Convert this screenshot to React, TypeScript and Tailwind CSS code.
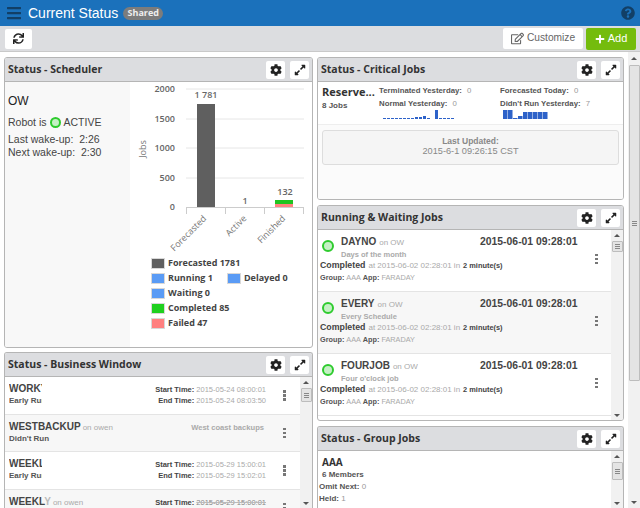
import { ReactNode } from 'react';
import { FaBars, FaCog, FaExpandAlt, FaPlus, FaQuestionCircle, FaRegEdit, FaSync } from 'react-icons/fa';

const titleFont = "font-['Open_Sans',sans-serif]";

function PanelHead({ title }: { title: string }) {
  return (
    <div className="flex h-[24px] shrink-0 items-center justify-between border-b border-[#b5b5b5] bg-[#dcdde0] pl-[3px] pr-[3px]">
      <span className={`${titleFont} text-[10.5px] font-bold text-[#333]`}>{title}</span>
      <div className="flex gap-[5px]">
        <span className="flex h-[18px] w-[19px] items-center justify-center rounded-[2px] bg-white text-[#222]">
          <FaCog size={12} />
        </span>
        <span className="flex h-[18px] w-[19px] items-center justify-center rounded-[2px] bg-white text-[#222]">
          <FaExpandAlt size={12} />
        </span>
      </div>
    </div>
  );
}

function Panel({ title, className, children }: { title: string; className: string; children: ReactNode }) {
  return (
    <div className={`flex flex-col overflow-hidden rounded-[3px] border border-[#b5b5b5] bg-white ${className}`}>
      <PanelHead title={title} />
      {children}
    </div>
  );
}

function Scrollbar({ thumbTop, thumbHeight, width = 'w-[12px]' }: { thumbTop: string; thumbHeight: string; width?: string }) {
  return (
    <div className={`flex ${width} shrink-0 flex-col items-center bg-[#f1f1f1]`}>
      <div className="flex h-[10px] shrink-0 items-center justify-center">
        <div className="h-0 w-0 border-x-[3px] border-b-[3px] border-x-transparent border-b-[#555]" />
      </div>
      <div className={`${thumbTop} ${thumbHeight} flex w-[11px] flex-col items-center justify-center gap-[1px] rounded-[1px] border border-[#bdbdbd] bg-[#e4e4e4]`}>
        <div className="h-px w-[5px] bg-[#888]" />
        <div className="h-px w-[5px] bg-[#888]" />
        <div className="h-px w-[5px] bg-[#888]" />
      </div>
      <div className="flex-1" />
      <div className="flex h-[10px] shrink-0 items-center justify-center">
        <div className="h-0 w-0 border-x-[3px] border-t-[3px] border-x-transparent border-t-[#555]" />
      </div>
    </div>
  );
}

function Kebab() {
  return (
    <div className="flex flex-col gap-[1.5px]">
      <div className="h-[2.5px] w-[3px] bg-[#777]" />
      <div className="h-[2.5px] w-[3px] bg-[#777]" />
      <div className="h-[2.5px] w-[3px] bg-[#777]" />
    </div>
  );
}

function Chart() {
  const ticks = [
    { label: '2000', y: 7 },
    { label: '1500', y: 37 },
    { label: '1000', y: 66 },
    { label: '500', y: 96 },
    { label: '0', y: 125 },
  ];
  return (
    <svg width="182" height="175" className="block shrink-0">
      <g fontFamily="Open Sans, sans-serif" fontSize="9" fill="#666">
        {ticks.map((t) => (
          <g key={t.label}>
            {t.label !== '0' && <line x1="56" x2="174" y1={t.y} y2={t.y} stroke="#e6e6e6" />}
            <text x="45" y={t.y + 3} textAnchor="end" fontWeight="600">{t.label}</text>
          </g>
        ))}
        <text transform="translate(16 67) rotate(-90)" textAnchor="middle" fontSize="9" fill="#777">Jobs</text>
      </g>
      <rect x="67" y="22" width="18" height="103" fill="#5f5f5f" />
      <rect x="145" y="118" width="18" height="4" fill="#1fc41f" />
      <rect x="145" y="122" width="18" height="3" fill="#ff8080" />
      <line x1="56" x2="174" y1="125.5" y2="125.5" stroke="#ccc" />
      {[56.5, 95.5, 134.5, 173.5].map((x) => (
        <line key={x} x1={x} x2={x} y1="125" y2="132" stroke="#ccc" />
      ))}
      <g fontFamily="Open Sans, sans-serif" fontSize="9" fontWeight="600" fill="#666" textAnchor="middle">
        <text x="76" y="16">1 781</text>
        <text x="115" y="122">1</text>
        <text x="155" y="113">132</text>
      </g>
      <g fontFamily="Open Sans, sans-serif" fontSize="9" fill="#777" textAnchor="end">
        <text transform="translate(77 137) rotate(-45)">Forecasted</text>
        <text transform="translate(117 137) rotate(-45)">Active</text>
        <text transform="translate(156 137) rotate(-45)">Finished</text>
      </g>
    </svg>
  );
}

function LegendItem({ color, label }: { color: string; label: string }) {
  return (
    <div className="flex h-[12px] items-center gap-[4px]">
      <span className={`h-[9px] w-[12px] ${color} outline outline-[#d8d8d8]`} />
      <span className={`${titleFont} text-[9px] font-bold leading-[12px] text-[#444]`}>{label}</span>
    </div>
  );
}

function Scheduler() {
  return (
    <Panel title="Status - Scheduler" className="h-[291px] shrink-0">
      <div className="flex min-h-0 flex-1">
        <div className="w-[125px] shrink-0 bg-[#f8f8f8] pl-[3px] pt-[11px] font-['Liberation_Sans',sans-serif] text-[10.5px] text-[#444]">
          <div className="text-[12px] leading-[16px] text-[#222]">OW</div>
          <div className="mt-[6px] flex items-center gap-[3px] leading-[14px]">
            Robot is
            <span className="h-[11px] w-[11px] rounded-full border-2 border-[#2ecb2e] bg-[#c5f0c5]" />
            ACTIVE
          </div>
          <div className="mt-[4px] leading-[13px]">Last wake-up:&nbsp; 2:26</div>
          <div className="leading-[13px]">Next wake-up:&nbsp; 2:30</div>
        </div>
        <div className="flex flex-1 flex-col">
          <Chart />
          <div className="flex flex-col gap-[3px] pl-[22px]">
            <LegendItem color="bg-[#5f5f5f]" label="Forecasted 1781" />
            <div className="flex gap-[15px]">
              <LegendItem color="bg-[#5a9bf5]" label="Running 1" />
              <LegendItem color="bg-[#5a9bf5]" label="Delayed 0" />
            </div>
            <LegendItem color="bg-[#5a9bf5]" label="Waiting 0" />
            <LegendItem color="bg-[#1fd01f]" label="Completed 85" />
            <LegendItem color="bg-[#ff8080]" label="Failed 47" />
          </div>
        </div>
      </div>
    </Panel>
  );
}

function WindowRow({ name, owner, status, start, end, note, shade, clip, ghost }: {
  name: ReactNode; owner?: string; status: string; start?: string; end?: string; note?: string; shade?: boolean; clip?: boolean; ghost?: boolean;
}) {
  return (
    <div className={`flex h-[37.5px] shrink-0 items-center border-b border-[#e4e4e4] pl-[4px] pr-[14px] ${shade ? 'bg-[#f7f7f7]' : 'bg-white'}`}>
      <div className="flex-1 pb-[2px] font-['Liberation_Sans',sans-serif]">
        <div className="flex h-[14px] items-baseline justify-between">
          <div className="flex items-baseline gap-[2px]">
            <span className={`${clip ? 'w-[33px] overflow-hidden' : ''} whitespace-nowrap text-[10px] font-bold text-[#444]`}>{name}</span>
            {owner && <span className="text-[8px] text-[#aaa]">on {owner}</span>}
          </div>
          {start && (
            <span className="whitespace-nowrap text-right text-[7.5px] text-[#aaa]">
              <b className="text-[#444]">Start Time:</b>{' '}
              <span className={ghost ? 'text-[#888] line-through decoration-[#bbb]' : ''}>{start}</span>
            </span>
          )}
          {note && <span className="mr-[2px] whitespace-nowrap text-[7.6px] font-bold text-[#aaa]">{note}</span>}
        </div>
        <div className="flex h-[12px] items-baseline justify-between">
          <span className={`${clip ? 'w-[33px] overflow-hidden' : ''} whitespace-nowrap text-[8px] font-bold text-[#555]`}>{status}</span>
          {end && (
            <span className="whitespace-nowrap text-right text-[7.5px] text-[#aaa]">
              <b className="text-[#444]">End Time:</b> {end}
            </span>
          )}
        </div>
      </div>
      <div className="ml-[17px]"><Kebab /></div>
    </div>
  );
}

function BusinessWindow() {
  return (
    <Panel title="Status - Business Window" className="min-h-0 flex-1 rounded-b-none border-b-0">
      <div className="flex min-h-0 flex-1">
        <div className="min-w-0 flex-1 overflow-hidden">
          <WindowRow clip name="WORKY" status="Early Run" start="2015-05-24 08:00:01" end="2015-05-24 08:03:50" />
          <WindowRow shade name="WESTBACKUP" owner="owen" status="Didn't Run" note="West coast backups" />
          <WindowRow clip name="WEEKLY" status="Early Run" start="2015-05-29 15:00:01" end="2015-05-29 15:02:01" />
          <WindowRow shade ghost name={<>WEEKL<span className="text-[#bbb]">Y</span></>} owner="owen" status="" start="2015-05-29 15:00:01" />
        </div>
        <Scrollbar thumbTop="mt-[1px]" thumbHeight="h-[14px]" />
      </div>
    </Panel>
  );
}

function Stat({ label, value }: { label: string; value: string }) {
  return (
    <div className="whitespace-nowrap font-['Liberation_Sans',sans-serif] text-[7.8px] font-bold leading-[12px] text-[#555]">
      {label} <span className="ml-[3px] font-normal text-[#999]">{value}</span>
    </div>
  );
}

function Spark({ heights, step, barWidth }: { heights: number[]; step: number; barWidth: number }) {
  return (
    <svg width={heights.length * step} height="9" className="block">
      {heights.map((h, i) => (
        <rect key={i} x={i * step} y={9 - h} width={barWidth} height={h} fill="#2d62c9" />
      ))}
    </svg>
  );
}

function CriticalJobs() {
  return (
    <Panel title="Status - Critical Jobs" className="h-[143px] shrink-0">
      <div className="flex h-[43px] shrink-0 border-b border-[#eee] pl-[4px] pt-[3px]">
        <div className={`${titleFont} w-[57px] shrink-0`}>
          <div className="text-[11px] font-bold leading-[14px] text-[#333]">Reserve...</div>
          <div className="mt-[1px] font-['Liberation_Sans',sans-serif] text-[8px] font-bold leading-[12px] text-[#555]">8 Jobs</div>
        </div>
        <div className="w-[121px] shrink-0">
          <Stat label="Terminated Yesterday:" value="0" />
          <div className="mt-[1px]"><Stat label="Normal Yesterday:" value="0" /></div>
          <div className="ml-[4px]">
            <Spark step={4} barWidth={3} heights={[1, 1, 1, 1, 1, 1, 1, 1, 2, 2, 3, 1, 0, 9, 1, 1, 1, 1]} />
          </div>
        </div>
        <div className="flex-1">
          <Stat label="Forecasted Today:" value="0" />
          <div className="mt-[1px]"><Stat label="Didn't Run Yesterday:" value="7" /></div>
          <div className="ml-[3px]">
            <Spark step={5} barWidth={4.5} heights={[9, 9, 1, 3, 7, 7, 7, 7, 7]} />
          </div>
        </div>
      </div>
      <div className="flex-1 bg-[#fbfbfb] px-[4px] pt-[5px]">
        <div className="flex h-[35px] flex-col items-center justify-center rounded-[3px] border border-[#dddddd] bg-[#f5f5f5] pb-[3px] font-['Liberation_Sans',sans-serif] leading-[9px] text-[#888]">
          <b className="text-[8.5px] font-bold">Last Updated:</b>
          <span className="mt-[1px] text-[9.2px]">2015-6-1 09:26:15 CST</span>
        </div>
      </div>
    </Panel>
  );
}

function JobRow({ name, desc, shade }: { name: string; desc: string; shade?: boolean }) {
  return (
    <div className={`flex h-[62px] shrink-0 border-b border-[#e4e4e4] pl-[2px] font-['Liberation_Sans',sans-serif] ${shade ? 'bg-[#f7f7f7]' : 'bg-white'}`}>
      <div className="flex-1">
        <div className="flex items-start pt-[4px]">
          <span className="ml-[2px] mt-[6px] h-[12px] w-[12px] shrink-0 rounded-full border-2 border-[#2ecb2e] bg-[#c5f0c5]" />
          <div className="ml-[7px] w-[139px]">
            <div className="flex items-baseline gap-[3px] leading-[15px]">
              <span className="text-[10px] font-bold text-[#444]">{name}</span>
              <span className="text-[8px] text-[#aaa]">on OW</span>
            </div>
            <div className="text-[7.5px] font-bold leading-[10px] text-[#aaa]">{desc}</div>
          </div>
          <span className="text-[10.4px] font-bold leading-[15px] text-[#444]">2015-06-01 09:28:01</span>
        </div>
        <div className="-mt-[1px] flex items-baseline gap-[3px] whitespace-nowrap leading-[13px]">
          <span className="text-[8.8px] font-bold text-[#444]">Completed</span>
          <span className="text-[8px] text-[#aaa]">at 2015-06-02 02:28:01 in</span>
          <span className="text-[7.4px] font-bold text-[#444]">2 minute(s)</span>
        </div>
        <div className="text-[7.3px] font-bold leading-[12px] text-[#555]">
          Group: <span className="font-normal text-[#aaa]">AAA</span> App: <span className="font-normal text-[#aaa]">FARADAY</span>
        </div>
      </div>
      <div className="flex w-[16px] items-center pb-[3px]"><Kebab /></div>
    </div>
  );
}

function RunningJobs() {
  return (
    <Panel title="Running & Waiting Jobs" className="h-[216px] shrink-0">
      <div className="flex min-h-0 flex-1">
        <div className="min-w-0 flex-1 overflow-hidden">
          <JobRow name="DAYNO" desc="Days of the month" />
          <JobRow shade name="EVERY" desc="Every Schedule" />
          <JobRow name="FOURJOB" desc="Four o'clock job" />
        </div>
        <Scrollbar thumbTop="mt-[1px]" thumbHeight="h-[11px]" />
      </div>
    </Panel>
  );
}

function GroupJobs() {
  return (
    <Panel title="Status - Group Jobs" className="min-h-0 flex-1 rounded-b-none border-b-0">
      <div className="flex min-h-0 flex-1">
        <div className="flex-1 pl-[4px] pt-[4px] font-['Liberation_Sans',sans-serif]">
          <div className={`${titleFont} text-[10px] font-bold leading-[14px] text-[#333]`}>AAA</div>
          <div className="text-[8px] font-bold leading-[11px] text-[#555]">6 Members</div>
          <div className="-ml-[3px] mt-[1px] text-[8px] font-bold leading-[12px] text-[#555]">Omit Next: <span className="font-normal text-[#999]">0</span></div>
          <div className="-ml-[3px] text-[8px] font-bold leading-[12px] text-[#555]">Held: <span className="font-normal text-[#999]">1</span></div>
        </div>
        <Scrollbar thumbTop="mt-[1px]" thumbHeight="h-[18px]" />
      </div>
    </Panel>
  );
}

export default function App() {
  return (
    <div className="flex h-[508px] w-[640px] flex-col overflow-hidden bg-white font-['Liberation_Sans',sans-serif]">
      <header className="flex h-[26px] shrink-0 items-center bg-[#1b71bb] pl-[6px] pr-[5px]">
        <FaBars size={16} className="text-[#123f66]" />
        <span className="ml-[6px] text-[14px] leading-[22px] text-white">Current Status</span>
        <span className={`${titleFont} ml-[5px] flex h-[13px] w-[40px] items-center justify-center rounded-full bg-[#7c7c7c] text-[9px] font-bold text-[#eee]`}>Shared</span>
        <FaQuestionCircle size={14} className="ml-auto text-[#123f66]" />
      </header>
      <div className="flex h-[26px] shrink-0 items-center justify-between border-b border-[#c9c9c9] bg-[#dcdde0] pl-[5px] pr-[4px]">
        <span className="flex h-[20px] w-[27px] items-center justify-center rounded-[2px] bg-white text-[#222]">
          <FaSync size={11} />
        </span>
        <div className="flex gap-[3px]">
          <span className="flex h-[21px] w-[80px] items-center justify-center gap-[3px] rounded-[2px] bg-white text-[10.2px] text-[#666]">
            <FaRegEdit size={13} /> Customize
          </span>
          <span className="flex h-[22px] w-[50px] items-center justify-center gap-[3px] rounded-[2px] bg-[#74bc0d] text-[11px] text-white">
            <FaPlus size={10} /> Add
          </span>
        </div>
      </div>
      <div className="flex min-h-0 flex-1">
        <div className="flex min-w-0 flex-1 gap-[4px] pl-[4px] pr-[4px] pt-[5px]">
          <div className="flex w-[309px] shrink-0 flex-col gap-[4px]">
            <Scheduler />
            <BusinessWindow />
          </div>
          <div className="flex min-w-0 flex-1 flex-col gap-[5px]">
            <CriticalJobs />
            <RunningJobs />
            <GroupJobs />
          </div>
        </div>
        <div className="flex w-[12px] shrink-0 flex-col items-center bg-[#f1f1f1]">
          <div className="flex h-[13px] shrink-0 items-center justify-center">
            <div className="h-0 w-0 border-x-[3px] border-b-[3px] border-x-transparent border-b-[#555]" />
          </div>
          <div className="flex h-[316px] w-[11px] flex-col items-center justify-center gap-[1px] rounded-[1px] border border-[#bdbdbd] bg-[#e4e4e4]">
            <div className="h-px w-[5px] bg-[#888]" />
            <div className="h-px w-[5px] bg-[#888]" />
            <div className="h-px w-[5px] bg-[#888]" />
          </div>
          <div className="flex-1" />
          <div className="flex h-[12px] shrink-0 items-center justify-center">
            <div className="h-0 w-0 border-x-[3px] border-t-[3px] border-x-transparent border-t-[#555]" />
          </div>
        </div>
      </div>
    </div>
  );
}
